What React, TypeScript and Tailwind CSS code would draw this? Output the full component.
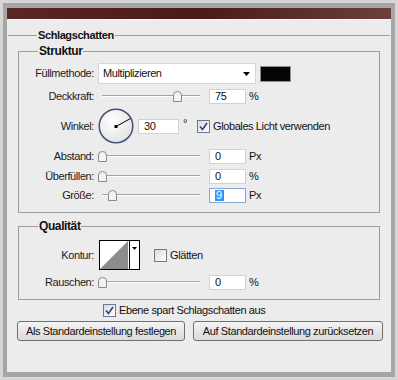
import React from "react";

const labelCls = "w-[75px] shrink-0 text-right text-[#1b1b1b]";

function Thumb({ left }: { left: number }) {
  return (
    <svg
      className="absolute top-[2px]"
      style={{ left }}
      width="9"
      height="11"
      viewBox="0 0 9 11"
    >
      <path
        d="M0.5 10.5 V4 Q0.5 0.5 4.5 0.5 Q8.5 0.5 8.5 4 V10.5 Z"
        fill="#f3f3f3"
        stroke="#8a8a8a"
      />
    </svg>
  );
}

function Slider({ pos }: { pos: number }) {
  return (
    <div className="relative ml-[4px] h-[15px] w-[104px] shrink-0">
      <div className="absolute left-[4px] right-[2px] top-[6px] h-[2px] border-b border-white bg-[#a3a3a3]" />
      <Thumb left={pos} />
    </div>
  );
}

function NumBox({ value, w = 37, focused = false }: { value: string; w?: number; focused?: boolean }) {
  return (
    <div
      className={`flex h-[15px] items-center bg-white pl-[5px] ${
        focused ? "border border-[#86a8d0]" : "border border-[#d2d2d2]"
      }`}
      style={{ width: w }}
    >
      {focused ? (
        <>
          <span className="bg-[#3399ff] px-[1px] leading-[11px] text-white">{value}</span>
          <span className="h-[11px] w-px bg-[#c8641e]" />
        </>
      ) : (
        <span>{value}</span>
      )}
    </div>
  );
}

function Check() {
  return (
    <div className="flex h-[13px] w-[13px] shrink-0 items-center justify-center border border-[#6a7791] bg-gradient-to-br from-[#dcdcd6] to-[#ffffff]">
      <svg width="9" height="9" viewBox="0 0 9 9">
        <path d="M1 4.5 L3.5 7.5 L8 1" fill="none" stroke="#2f3f8c" strokeWidth="1.6" />
      </svg>
    </div>
  );
}

function EmptyCheck() {
  return (
    <div className="h-[13px] w-[13px] shrink-0 border border-[#6a7791] bg-gradient-to-br from-[#dcdcd6] to-[#ffffff]" />
  );
}

function SliderRow({ label, pos, value, unit, focused = false }: any) {
  return (
    <div className="flex h-[15px] items-center">
      <span className={labelCls}>{label}</span>
      <Slider pos={pos} />
      <div className="ml-[7px]">
        <NumBox value={value} focused={focused} />
      </div>
      <span className="ml-[3px]">{unit}</span>
    </div>
  );
}

export default function App() {
  return (
    <div className="h-[380px] w-[398px] bg-[#d6d6d6] p-[3px] font-['Liberation_Sans',Arial,sans-serif] text-[11px] tracking-[-0.4px] text-[#111]">
      <div className="flex h-full flex-col border-x-[4px] border-y-[5px] border-[#a6a6a6] bg-[#ececec]">
        <div className="h-[11px] shrink-0 bg-linear-to-r from-[#5a2626] via-[#4a1a1a] to-[#6c3e3e]" />
        <div className="h-px bg-[#f6f6f6]" />

        <fieldset className="mx-[1px] mt-[8px] border-0 border-t border-[#9c9c9c] px-[10px]">
          <legend className="ml-[19px] px-[1px] font-bold leading-[14px]">Schlagschatten</legend>

          <fieldset className="mt-[2px] border border-[#9c9c9c] pb-[9px] pt-[5px]">
            <legend className="ml-[19px] px-[1px] text-[12px] font-bold leading-[14px]">Struktur</legend>

            <div className="flex h-[21px] items-center">
              <span className={labelCls}>Füllmethode:</span>
              <div className="ml-[4px] flex h-[21px] w-[158px] items-center justify-between border border-[#d6d6d6] bg-white pl-[4px] pr-[5px]">
                <span>Multiplizieren</span>
                <svg width="7" height="4" viewBox="0 0 7 4">
                  <path d="M0 0h7L3.5 4z" fill="#000" />
                </svg>
              </div>
              <div className="ml-[4px] h-[16px] w-[31px] border border-[#8f8f8f] bg-[#050505]" />
            </div>

            <div className="mt-[5px]">
              <SliderRow label="Deckkraft:" pos={75} value="75" unit="%" />
            </div>

            <div className="mt-[4px] flex h-[36px] items-center">
              <span className={labelCls}>Winkel:</span>
              <svg className="ml-[4px] shrink-0" width="36" height="36" viewBox="0 0 36 36">
                <defs>
                  <radialGradient id="dial" cx="0.4" cy="0.35" r="0.7">
                    <stop offset="0" stopColor="#ffffff" />
                    <stop offset="1" stopColor="#e2e2e2" />
                  </radialGradient>
                </defs>
                <circle cx="18" cy="18" r="16.8" fill="url(#dial)" stroke="#45527e" strokeWidth="1.5" />
                <line x1="18" y1="18.5" x2="32.5" y2="10.5" stroke="#000" strokeWidth="1" />
                <rect x="16.5" y="17" width="3" height="3" fill="#000" />
              </svg>
              <div className="ml-[4px]">
                <NumBox value="30" w={41} />
              </div>
              <span className="ml-[4px] -mt-[6px]">°</span>
              <div className="ml-[10px] flex items-center">
                <Check />
                <span className="ml-[3px]">Globales Licht verwenden</span>
              </div>
            </div>

            <div className="mt-[5px]">
              <SliderRow label="Abstand:" pos={0} value="0" unit="Px" />
            </div>
            <div className="mt-[5px]">
              <SliderRow label="Überfüllen:" pos={0} value="0" unit="%" />
            </div>
            <div className="mt-[4px]">
              <SliderRow label="Größe:" pos={10} value="9" unit="Px" focused />
            </div>
          </fieldset>

          <fieldset className="mt-[6px] border border-[#9c9c9c] pb-[9px] pt-[7px]">
            <legend className="ml-[19px] px-[1px] text-[12px] font-bold leading-[14px]">Qualität</legend>

            <div className="flex h-[30px] items-center">
              <span className={labelCls}>Kontur:</span>
              <svg className="ml-[5px] shrink-0" width="41" height="30" viewBox="0 0 41 30">
                <rect x="0.5" y="0.5" width="40" height="29" fill="#fff" stroke="#000" />
                <path d="M1 29 L29 1 V29 Z" fill="#8c8c8c" />
                <line x1="30.5" y1="0" x2="30.5" y2="30" stroke="#000" />
                <path d="M33 7h5l-2.5 3z" fill="#000" />
              </svg>
              <div className="ml-[14px] flex items-center">
                <EmptyCheck />
                <span className="ml-[3px]">Glätten</span>
              </div>
            </div>

            <div className="mt-[5px]">
              <SliderRow label="Rauschen:" pos={0} value="0" unit="%" />
            </div>
          </fieldset>
        </fieldset>

        <div className="ml-[96px] mt-[4px] flex h-[13px] items-center">
          <Check />
          <span className="ml-[3px]">Ebene spart Schlagschatten aus</span>
        </div>

        <div className="ml-[10px] mt-[4px] flex gap-[8px]">
          <button className="h-[20px] w-[168px] rounded-[3px] border border-[#707070] bg-gradient-to-b from-[#f4f4f4] to-[#dadada]">
            Als Standardeinstellung festlegen
          </button>
          <button className="h-[20px] w-[190px] rounded-[3px] border border-[#707070] bg-gradient-to-b from-[#f4f4f4] to-[#dadada]">
            Auf Standardeinstellung zurücksetzen
          </button>
        </div>
      </div>
    </div>
  );
}
